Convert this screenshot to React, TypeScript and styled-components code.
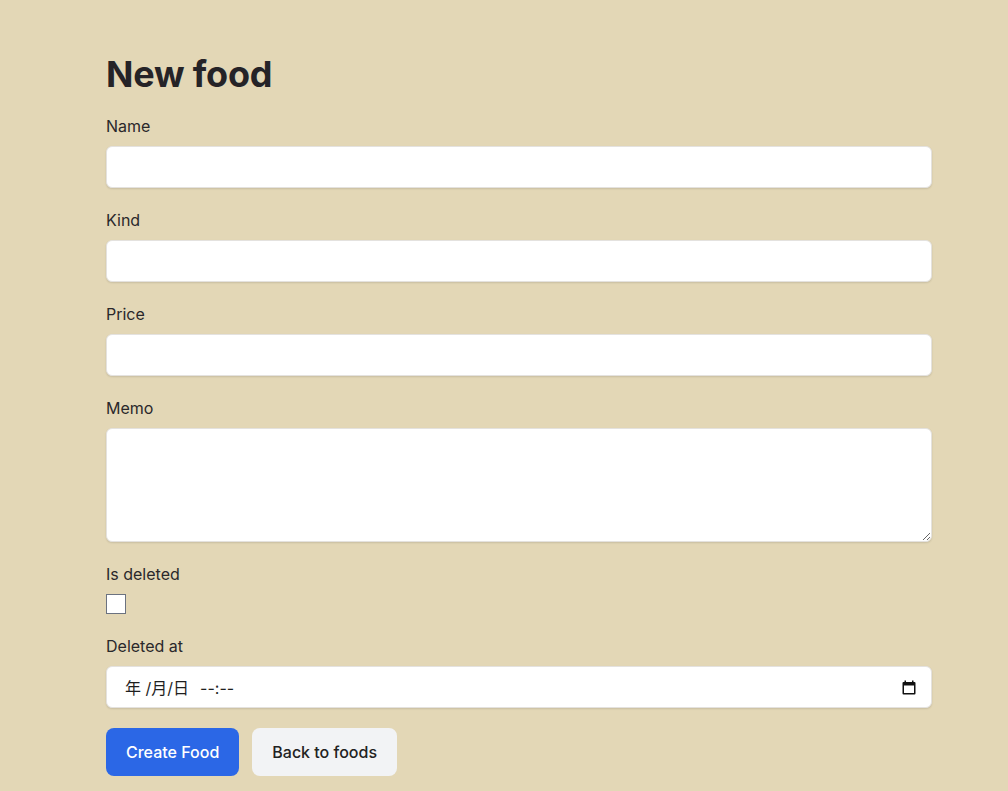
import styled, { createGlobalStyle } from 'styled-components';

const GlobalStyle = createGlobalStyle`
    html, body {
        margin: 0;
        padding: 0;
        background: #e3d7b6;
    }
    body {
        font-family: Inter, 'Noto Sans', sans-serif;
        color: #232226;
    }
    * {
        box-sizing: border-box;
    }
`;

const Page = styled.main`
    padding: 54px 0 0 106px;
`;

const Content = styled.div`
    width: 826px;
`;

const Title = styled.h1`
    margin: 0;
    font-size: 36px;
    line-height: 40px;
    font-weight: 700;
    letter-spacing: -0.2px;
    color: #252327;
`;

const Field = styled.div`
    margin-top: 20px;
`;

const Label = styled.label`
    display: block;
    font-size: 16px;
    line-height: 24px;
    color: #2a282b;
`;

const TextInput = styled.input`
    display: block;
    width: 100%;
    height: 42px;
    margin-top: 8px;
    padding: 8px 12px;
    font: inherit;
    background: #fff;
    border: 1px solid #e4e2df;
    border-radius: 6px;
    box-shadow: 0 1px 2px rgba(0, 0, 0, 0.12);
    outline: none;
`;

const TextArea = styled.textarea`
    display: block;
    width: 100%;
    height: 114px;
    margin-top: 8px;
    padding: 8px 12px;
    font: inherit;
    background: #fff;
    border: 1px solid #e4e2df;
    border-radius: 6px;
    box-shadow: 0 1px 2px rgba(0, 0, 0, 0.12);
    outline: none;
    resize: vertical;
`;

const CheckBox = styled.input`
    appearance: none;
    display: block;
    width: 20px;
    height: 20px;
    margin: 8px 0 0;
    background: #fff;
    border: 1px solid #6b7280;
    border-radius: 0;
`;

const DateBox = styled.div`
    display: flex;
    align-items: center;
    justify-content: space-between;
    height: 42px;
    margin-top: 8px;
    padding: 0 15px 0 18px;
    background: #fff;
    border: 1px solid #e4e2df;
    border-radius: 6px;
    box-shadow: 0 1px 2px rgba(0, 0, 0, 0.12);
    font-family: Inter, 'Noto Sans CJK JP', sans-serif;
    font-size: 16px;
    color: #1f1f1f;
`;

const DateText = styled.span`
    white-space: pre;
`;

const TimeText = styled.span`
    margin-left: 11px;
`;

const Actions = styled.div`
    display: flex;
    gap: 13px;
    margin-top: 20px;
`;

const Button = styled.button<{ $primary?: boolean }>`
    height: 48px;
    padding: 0 20px;
    border: none;
    border-radius: 8px;
    font-family: Inter, sans-serif;
    font-size: 16px;
    font-weight: 500;
    background: ${(p) => (p.$primary ? '#2b67e6' : '#f2f3f5')};
    color: ${(p) => (p.$primary ? '#fff' : '#222')};
    cursor: pointer;
`;

const CalendarIcon = () => (
    <svg width="14" height="15" viewBox="0 0 14 15" fill="none">
        <rect x="0.5" y="2" width="13" height="12.5" rx="1" fill="#111" />
        <rect x="2" y="5.5" width="10" height="7.5" fill="#fff" />
        <rect x="2.5" y="0.5" width="1.5" height="2.5" fill="#111" />
        <rect x="10" y="0.5" width="1.5" height="2.5" fill="#111" />
    </svg>
);

const App = () => {
    return (
        <>
            <GlobalStyle />
            <Page>
                <Content>
                    <Title>New food</Title>
                    <Field>
                        <Label htmlFor="name">Name</Label>
                        <TextInput id="name" type="text" />
                    </Field>
                    <Field>
                        <Label htmlFor="kind">Kind</Label>
                        <TextInput id="kind" type="text" />
                    </Field>
                    <Field>
                        <Label htmlFor="price">Price</Label>
                        <TextInput id="price" type="text" />
                    </Field>
                    <Field>
                        <Label htmlFor="memo">Memo</Label>
                        <TextArea id="memo" rows={4} />
                    </Field>
                    <Field>
                        <Label htmlFor="deleted">Is deleted</Label>
                        <CheckBox id="deleted" type="checkbox" />
                    </Field>
                    <Field>
                        <Label>Deleted at</Label>
                        <DateBox>
                            <DateText>
                                年 /月/日
                                <TimeText>--:--</TimeText>
                            </DateText>
                            <CalendarIcon />
                        </DateBox>
                    </Field>
                    <Actions>
                        <Button $primary>Create Food</Button>
                        <Button>Back to foods</Button>
                    </Actions>
                </Content>
            </Page>
        </>
    );
};

export default App;
